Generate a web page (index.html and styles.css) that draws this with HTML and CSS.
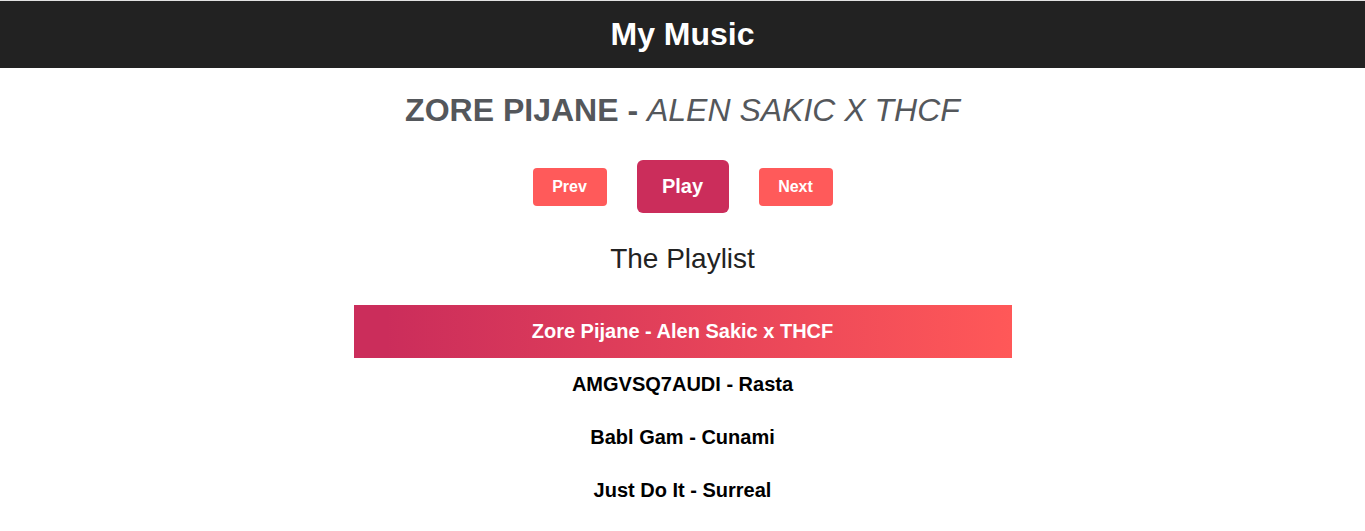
FILE: index.html
```html
<!DOCTYPE html>
<html>
<head>
<meta charset="utf-8">
<title>My Music</title>
<link rel="stylesheet" href="styles.css">
</head>
<body>
<header class="topbar"><h1 class="brand">My Music</h1></header>
<main class="player">
  <h2 class="now"><span class="now-song">ZORE PIJANE - </span><span class="now-artist">ALEN SAKIC X THCF</span></h2>
  <div class="controls">
    <button class="btn btn-small">Prev</button>
    <button class="btn btn-play">Play</button>
    <button class="btn btn-small">Next</button>
  </div>
  <h3 class="list-title">The Playlist</h3>
  <ul class="playlist">
    <li class="track track-active">Zore Pijane - Alen Sakic x THCF</li>
    <li class="track">AMGVSQ7AUDI - Rasta</li>
    <li class="track">Babl Gam - Cunami</li>
    <li class="track">Just Do It - Surreal</li>
  </ul>
</main>
</body>
</html>
```
FILE: styles.css
```css
html, body {
  margin: 0;
  padding: 0;
  background: #fff;
  font-family: "Liberation Sans", Arial, sans-serif;
}
body {
  border-top: 1px solid #e2e2e2;
}
.topbar {
  background: #222222;
  height: 67px;
  display: flex;
  align-items: center;
  justify-content: center;
}
.brand {
  margin: 0;
  color: #fff;
  font-size: 32px;
  font-weight: bold;
  line-height: 67px;
}
.player {
  display: flex;
  flex-direction: column;
  align-items: center;
}
.now {
  margin: 22px 0 0;
  font-size: 32px;
  line-height: 40px;
  color: #54575b;
  font-weight: bold;
}
.now-artist {
  font-weight: normal;
  font-style: italic;
}
.controls {
  display: flex;
  align-items: center;
  gap: 30px;
  margin-top: 30px;
}
.btn {
  border: none;
  color: #fff;
  font-family: "Liberation Sans", Arial, sans-serif;
  font-weight: bold;
  padding: 0;
  cursor: pointer;
}
.btn-small {
  width: 74px;
  height: 38px;
  border-radius: 4px;
  background: #ff5a5a;
  font-size: 16px;
}
.btn-play {
  width: 92px;
  height: 53px;
  border-radius: 6px;
  background: #cb2d5b;
  font-size: 20px;
}
.list-title {
  margin: 30px 0 0;
  font-size: 28px;
  line-height: 32px;
  font-weight: normal;
  color: #222;
}
.playlist {
  list-style: none;
  margin: 30px 0 0;
  padding: 0;
  width: 658px;
}
.track {
  height: 53px;
  line-height: 53px;
  text-align: center;
  font-size: 20px;
  font-weight: bold;
  color: #000;
}
.track-active {
  color: #fff;
  background: linear-gradient(to right, #cb2d5b 5%, #ff5858 100%);
}
```
